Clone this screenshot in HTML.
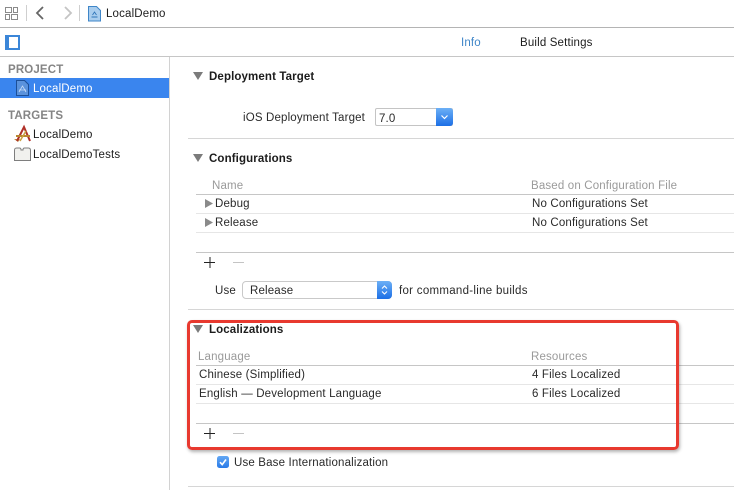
<!DOCTYPE html>
<html>
<head>
<meta charset="utf-8">
<style>
html,body{margin:0;padding:0;background:#fff;}
#p{position:relative;width:734px;height:490px;overflow:hidden;background:#fff;font-family:"Liberation Sans",sans-serif;font-size:11.5px;color:#2a2a2a;letter-spacing:.16px;}
.t{position:absolute;line-height:14px;white-space:nowrap;margin-top:1px;}
.b{font-weight:bold;color:#1c1c1c;font-size:11.5px;letter-spacing:.12px;}
.g{color:#9a9a9a;}
.l{position:absolute;height:1px;background:#d6d6d6;right:0;}
.d{background:#c6c6c6;}
svg{position:absolute;overflow:visible;}
</style>
</head>
<body>
<div id="p">
<!-- top toolbar -->
<svg style="left:0;top:0" width="110" height="30" fill="none">
<g stroke="#8a8a8a" stroke-width="1">
<rect x="5.500" y="7.500" width="6" height="5"/><rect x="13.500" y="7.500" width="4" height="5"/>
<rect x="5.500" y="14.500" width="4" height="5"/><rect x="11.500" y="14.500" width="6" height="5"/>
</g>
<path d="M26.500 5v16M79.500 5v16" stroke="#cfcfcf"/>
<path d="M43 7l-6 6 6 6" stroke="#666" stroke-width="1.800"/>
<path d="M65 7l6 6-6 6" stroke="#c4c4c4" stroke-width="1.800"/>
<path d="M88.500 6.500h8l4 4v10.500h-12z" fill="#a9cdee" stroke="#3f86c8"/>
<path d="M91.500 17h6M92.500 15l2-3 2 3" stroke="#2f75b8" stroke-width=".9"/>
</svg>
<div class="t" style="left:106px;top:6px;color:#1c1c1c">LocalDemo</div>
<div class="l d" style="left:0;top:27px;background:#b4b4b4"></div>

<!-- second bar -->
<div style="position:absolute;left:5px;top:35px;width:15px;height:15px;box-sizing:border-box;border:2px solid #3b86d8;border-left-width:4px;background:#fff"></div>
<div class="t" style="left:461px;top:35px;color:#3f86c8">Info</div>
<div class="t" style="left:520px;top:35px;color:#1c1c1c">Build Settings</div>
<div class="l d" style="left:0;top:56px"></div>

<!-- sidebar -->
<div style="position:absolute;left:169px;top:57px;width:1px;height:433px;background:#d2d2d2"></div>
<div class="t b" style="left:8px;top:62px;color:#858585;letter-spacing:.15px">PROJECT</div>
<div style="position:absolute;left:0;top:78px;width:169px;height:20px;background:#3a85ee"></div>
<svg style="left:15px;top:79px" width="15" height="18" fill="none">
<path d="M1.500 1.500h8l4 4v11h-12z" fill="#5a92dc" stroke="#1c4f98"/>
<path d="M4 13l3.500-6 3.500 6M4 11h7" stroke="#c8dcf6" stroke-width=".8"/>
</svg>
<div class="t" style="left:33px;top:81px;color:#fff">LocalDemo</div>
<div class="t b" style="left:8px;top:108px;color:#858585;letter-spacing:.15px">TARGETS</div>
<svg style="left:14px;top:126px" width="18" height="17" fill="none">
<path d="M0 13l4 3 2-3z" fill="#b98a3c"/>
<path d="M3 15L10 1l6 14" stroke="#b03028" stroke-width="2"/>
<path d="M2 10h14" stroke="#b8862e" stroke-width="2"/>
<path d="M6 15l6-10" stroke="#c9a040" stroke-width="1.500"/>
</svg>
<div class="t" style="left:33px;top:127px;color:#1c1c1c">LocalDemo</div>
<svg style="left:14px;top:147px" width="17" height="15" fill="none">
<path d="M.5 3.500c0-2 .5-2.500 2-2.500h3c1 0 1.500 1 1.500 2h2c0-1 .5-2 1.500-2h4c1 0 2 .5 2 2.500v10h-16z" fill="#f1f1ee" stroke="#7e7e7e"/>
</svg>
<div class="t" style="left:33px;top:147px;color:#1c1c1c">LocalDemoTests</div>

<!-- Deployment Target -->
<svg style="left:193px;top:72px" width="10" height="9"><path d="M0 0h10l-5 8z" fill="#7b7b7b"/></svg>
<div class="t b" style="left:209px;top:69px">Deployment Target</div>
<div class="t" style="left:243px;top:110px">iOS Deployment Target</div>
<div style="position:absolute;left:375px;top:108px;width:78px;height:18px;box-sizing:border-box;border:1px solid #c4c4c4;border-radius:2px;background:#fff"></div>
<div style="position:absolute;left:436px;top:108px;width:17px;height:18px;border-radius:0 3px 3px 0;background:linear-gradient(#6db0f6,#1c6fe6)"></div>
<svg style="left:440px;top:114px" width="9" height="6" fill="none"><path d="M1.500 1.500l3 3 3-3" stroke="#fff" stroke-width="1.200"/></svg>
<div class="t" style="left:379px;top:111px">7.0</div>
<div class="l" style="left:188px;top:138px"></div>

<!-- Configurations -->
<svg style="left:193px;top:154px" width="10" height="9"><path d="M0 0h10l-5 8z" fill="#7b7b7b"/></svg>
<div class="t b" style="left:209px;top:151px">Configurations</div>
<div class="t g" style="left:212px;top:178px">Name</div>
<div class="t g" style="left:531px;top:178px">Based on Configuration File</div>
<div class="l d" style="left:196px;top:194px"></div>
<svg style="left:205px;top:199px" width="8" height="10"><path d="M0 0l8 4.500L0 9z" fill="#8a8a8a"/></svg>
<div class="t" style="left:215px;top:196px">Debug</div>
<div class="t" style="left:532px;top:196px">No Configurations Set</div>
<div class="l" style="left:196px;top:213px;background:#e6e6e6"></div>
<svg style="left:205px;top:218px" width="8" height="10"><path d="M0 0l8 4.500L0 9z" fill="#8a8a8a"/></svg>
<div class="t" style="left:215px;top:215px">Release</div>
<div class="t" style="left:532px;top:215px">No Configurations Set</div>
<div class="l" style="left:196px;top:232px;background:#e6e6e6"></div>
<div class="l d" style="left:196px;top:252px"></div>
<svg style="left:204px;top:257px" width="40" height="12"><path d="M6 0v11M0 5.500h11" stroke="#222" fill="none"/><path d="M29 5.500h11" stroke="#c4c4c4"/></svg>
<div class="t" style="left:215px;top:283px">Use</div>
<div style="position:absolute;left:242px;top:281px;width:150px;height:18px;box-sizing:border-box;border:1px solid #c9c9c9;border-radius:4px;background:#fff"></div>
<div style="position:absolute;left:377px;top:281px;width:15px;height:18px;border-radius:0 4px 4px 0;background:linear-gradient(#6db0f6,#1c6fe6)"></div>
<svg style="left:380px;top:284px" width="9" height="12" fill="none"><path d="M2 4.500l2.500-2.500 2.500 2.500M2 7.500l2.500 2.500 2.500-2.500" stroke="#fff" stroke-width="1.100"/></svg>
<div class="t" style="left:250px;top:283px">Release</div>
<div class="t" style="left:399px;top:283px;letter-spacing:.29px">for command-line builds</div>
<div class="l" style="left:188px;top:309px"></div>

<!-- Localizations -->
<svg style="left:193px;top:325px" width="10" height="9"><path d="M0 0h10l-5 8z" fill="#7b7b7b"/></svg>
<div class="t b" style="left:209px;top:322px">Localizations</div>
<div class="t g" style="left:198px;top:349px">Language</div>
<div class="t g" style="left:531px;top:349px">Resources</div>
<div class="l d" style="left:196px;top:365px"></div>
<div class="t" style="left:199px;top:367px">Chinese (Simplified)</div>
<div class="t" style="left:532px;top:367px">4 Files Localized</div>
<div class="l" style="left:196px;top:384px;background:#e6e6e6"></div>
<div class="t" style="left:199px;top:386px">English — Development Language</div>
<div class="t" style="left:532px;top:386px">6 Files Localized</div>
<div class="l" style="left:196px;top:403px;background:#e6e6e6"></div>
<div class="l d" style="left:196px;top:423px"></div>
<svg style="left:204px;top:428px" width="40" height="12"><path d="M6 0v11M0 5.500h11" stroke="#222" fill="none"/><path d="M29 5.500h11" stroke="#c4c4c4"/></svg>
<div style="position:absolute;left:217px;top:456px;width:12px;height:12px;border-radius:2.500px;background:linear-gradient(#63a8f4,#2a7ae8)"></div>
<svg style="left:217px;top:456px" width="12" height="12" fill="none"><path d="M3 6.200l2.200 2.400L9 3.500" stroke="#fff" stroke-width="1.600"/></svg>
<div class="t" style="left:234px;top:455px">Use Base Internationalization</div>
<div class="l" style="left:188px;top:486px"></div>

<!-- red annotation -->
<div style="position:absolute;left:187px;top:320px;width:492px;height:130px;box-sizing:border-box;border:3px solid #e8392f;border-radius:5px;box-shadow:1px 2px 3px rgba(0,0,0,.3)"></div>
</div>
</body>
</html>
